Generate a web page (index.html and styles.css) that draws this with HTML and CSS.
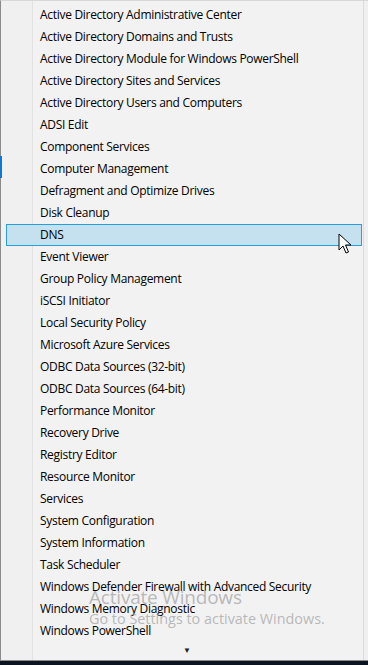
FILE: index.html
```html
<!DOCTYPE html>
<html lang="en">
<head>
  <meta charset="UTF-8">
  <title>Windows Administrative Tools</title>
  <link rel="stylesheet" href="styles.css">
</head>
<body>
  <div class="screen">
    <div class="menu">
      <div class="gutter"></div>
      <div class="list">
        <div class="item">Active Directory Administrative Center</div>
        <div class="item">Active Directory Domains and Trusts</div>
        <div class="item">Active Directory Module for Windows PowerShell</div>
        <div class="item">Active Directory Sites and Services</div>
        <div class="item">Active Directory Users and Computers</div>
        <div class="item">ADSI Edit</div>
        <div class="item">Component Services</div>
        <div class="item">Computer Management</div>
        <div class="item">Defragment and Optimize Drives</div>
        <div class="item">Disk Cleanup</div>
        <div class="item selected">DNS</div>
        <div class="item">Event Viewer</div>
        <div class="item">Group Policy Management</div>
        <div class="item">iSCSI Initiator</div>
        <div class="item">Local Security Policy</div>
        <div class="item">Microsoft Azure Services</div>
        <div class="item">ODBC Data Sources (32-bit)</div>
        <div class="item">ODBC Data Sources (64-bit)</div>
        <div class="item">Performance Monitor</div>
        <div class="item">Recovery Drive</div>
        <div class="item">Registry Editor</div>
        <div class="item">Resource Monitor</div>
        <div class="item">Services</div>
        <div class="item">System Configuration</div>
        <div class="item">System Information</div>
        <div class="item">Task Scheduler</div>
        <div class="item">Windows Defender Firewall with Advanced Security</div>
        <div class="item">Windows Memory Diagnostic</div>
        <div class="item">Windows PowerShell</div>
        <div class="more">&#9660;</div>
      </div>
      <div class="edge"></div>
    </div>
    <div class="taskbar"></div>

    <div class="behind"></div>

    <svg class="cursor" width="14" height="22" viewBox="0 0 14 22">
      <path d="M1 1 L1 17 L5 13 L8 20 L10.5 19 L7.5 12 L13 12 Z" fill="#fff" stroke="#000" stroke-width="1" stroke-linejoin="round"/>
    </svg>

    <div class="watermark">
      <div class="wm-title">Activate Windows</div>
      <div class="wm-text">Go to Settings to activate Windows.</div>
    </div>
  </div>
</body>
</html>
```

FILE: styles.css
```css
body {
  margin: 0;
  padding: 0;
  background-color: #0c1422;
  font-family: "Open Sans", "Noto Sans", sans-serif;
}
.screen {
  position: relative;
  width: 368px;
  height: 665px;
  overflow: hidden;
}
.menu {
  display: flex;
  height: 661px;
  background-color: #f2f2f2;
  border-left: 1px solid #8a8a8a;
  border-bottom: 1px solid #8a8a8a;
  border-top: 1px solid #d8d8d8;
  box-sizing: border-box;
}
.gutter {
  width: 31px;
  background-color: #f0f0f0;
  border-right: 1px solid #e2e2e2;
  box-shadow: 1px 0 0 #ffffff;
  flex-shrink: 0;
}
.list {
  flex: 1;
  padding: 3px 0 0 4px;
  background-color: #f2f2f2;
}
.item {
  height: 22px;
  line-height: 22px;
  font-size: 12px;
  color: #000;
  padding-left: 3px;
  margin-right: 1px;
  box-sizing: border-box;
  white-space: nowrap;
  letter-spacing: -0.3px;
}
.item.selected {
  background-color: #c5e1ef;
  border: 1px solid #26a0da;
  margin-left: -31px;
  padding-left: 33px;
  line-height: 20px;
}
.more {
  text-align: center;
  font-size: 8px;
  line-height: 10px;
  color: #222;
  padding-top: 3px;
  padding-right: 26px;
}
.edge {
  width: 4px;
  background-color: #f0f0f0;
  border-left: 1px solid #dcdcdc;
  flex-shrink: 0;
}
.taskbar {
  height: 4px;
}
.behind {
  position: absolute;
  left: 0;
  top: 156px;
  width: 2px;
  height: 22px;
  background-color: #0f78d0;
}
.cursor {
  position: absolute;
  left: 338px;
  top: 233px;
}
.watermark {
  position: absolute;
  left: 89px;
  top: 585px;
  color: rgba(150, 150, 150, 0.65);
  pointer-events: none;
}
.wm-title {
  font-size: 19px;
  line-height: 24px;
  letter-spacing: -0.2px;
}
.wm-text {
  font-size: 14.4px;
  line-height: 20px;
}
```
